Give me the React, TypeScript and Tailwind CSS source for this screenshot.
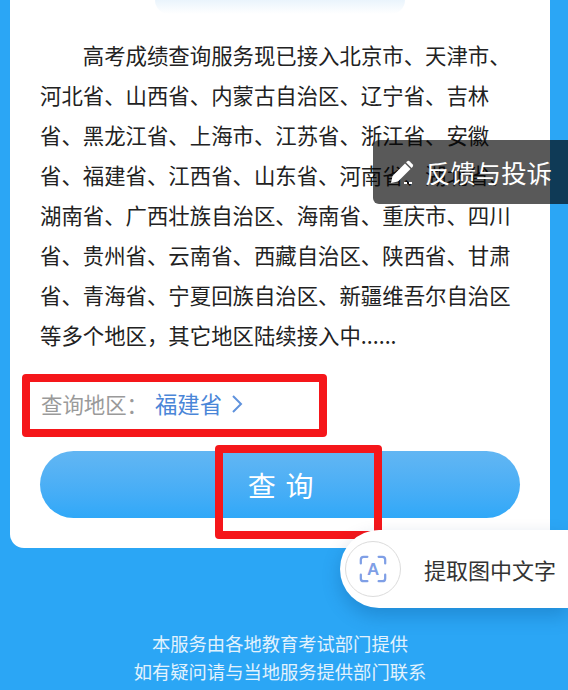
import React from 'react';

const regions =
  '高考成绩查询服务现已接入北京市、天津市、河北省、山西省、内蒙古自治区、辽宁省、吉林省、黑龙江省、上海市、江苏省、浙江省、安徽省、福建省、江西省、山东省、河南省、湖北省、湖南省、广西壮族自治区、海南省、重庆市、四川省、贵州省、云南省、西藏自治区、陕西省、甘肃省、青海省、宁夏回族自治区、新疆维吾尔自治区等多个地区，其它地区陆续接入中......';

const font = { fontFamily: '"Noto Sans CJK SC", "Noto Sans", sans-serif' };

const ScanIcon = () => (
  <svg width="30" height="30" viewBox="0 0 32 32" fill="none" stroke="#7f9fe6" strokeWidth="2.4" strokeLinecap="round">
    <path d="M3 10V6a3 3 0 0 1 3-3h4M22 3h4a3 3 0 0 1 3 3v4M29 22v4a3 3 0 0 1-3 3h-4M10 29H6a3 3 0 0 1-3-3v-4" />
    <text x="16" y="22" textAnchor="middle" fontSize="18" fontWeight="700" fill="#7f9fe6" stroke="none" fontFamily="Liberation Sans, sans-serif">
      A
    </text>
  </svg>
);

const PenIcon = () => (
  <svg width="26" height="26" viewBox="0 0 26 26" fill="white">
    <path d="M2 24l1.5-7L16 4.5l5.5 5.5L9 22.5z" />
    <path d="M18 2.5a2 2 0 0 1 2.8 0l2.7 2.7a2 2 0 0 1 0 2.8l-.9.9-5.5-5.5z" />
    <path d="M15 23h3v2h-3zM20 23h3v2h-3z" />
  </svg>
);

export default function App() {
  return (
    <div className="relative w-[568px] h-[690px] overflow-hidden bg-[#2ba6f5] flex flex-col" style={font}>
      <div className="ml-[10px] mr-[18px] h-[548px] shrink-0 bg-white rounded-bl-[14px] relative">
        <div className="mx-auto w-[250px] h-[14px] bg-gradient-to-b from-[#eaf4fc] to-white rounded-b-full" />
        <p className="mt-[21px] ml-[30px] w-[474px] text-[21.4px] leading-[40px] text-[#222222] indent-[2em]">{regions}</p>
        <div className="mt-[29px] ml-[31px] flex items-center h-[40px] text-[21.4px]">
          <span className="text-[#9a9a9a]">查询地区：</span>
          <span className="text-[#4a86d8] text-[22.4px] ml-[7px]">福建省</span>
          <svg className="ml-[9px]" width="12" height="20" viewBox="0 0 12 20" fill="none" stroke="#5f92dc" strokeWidth="2">
            <path d="M2 2l8 8-8 8" />
          </svg>
        </div>
        <div className="mt-[27px] mx-[30px] h-[67px] rounded-full bg-gradient-to-b from-[#62b6f3] to-[#2fa8f8] flex items-center justify-center pl-[3px] text-white text-[28px] tracking-[0.06em]">
          查 询
        </div>
      </div>

      <div className="mt-[81px] flex flex-col items-center w-[560px] text-[#e2f2fd] text-[18.3px] leading-[28px]">
        <span>本服务由各地教育考试部门提供</span>
        <span>如有疑问请与当地服务提供部门联系</span>
      </div>

      {/* red annotation boxes */}
      <div className="absolute left-[22px] top-[374px] w-[305px] h-[63px] border-[8px] border-[#f5161a] rounded-[4px]" />
      <div className="absolute left-[215px] top-[445px] w-[167px] h-[94px] border-[8px] border-[#f5161a] rounded-[4px]" />

      {/* feedback overlay */}
      <div className="absolute left-[373px] top-[140px] w-[195px] h-[64px] bg-black/65 rounded-l-[6px] flex items-center pl-[16px] gap-[10px] text-white text-[25.4px] whitespace-nowrap">
        <PenIcon />
        <span>反馈与投诉</span>
      </div>

      {/* extract text pill */}
      <div className="absolute left-[340px] top-[530px] w-[228px] h-[78px] bg-white rounded-l-[39px] shadow-[0_8px_18px_rgba(0,60,120,0.25)] flex items-center pl-[5px]">
        <div className="w-[56px] h-[56px] shrink-0 rounded-full border border-[#dcdcdc] flex items-center justify-center">
          <ScanIcon />
        </div>
        <span className="ml-[23px] text-[22px] text-[#333] whitespace-nowrap">提取图中文字</span>
      </div>
    </div>
  );
}
